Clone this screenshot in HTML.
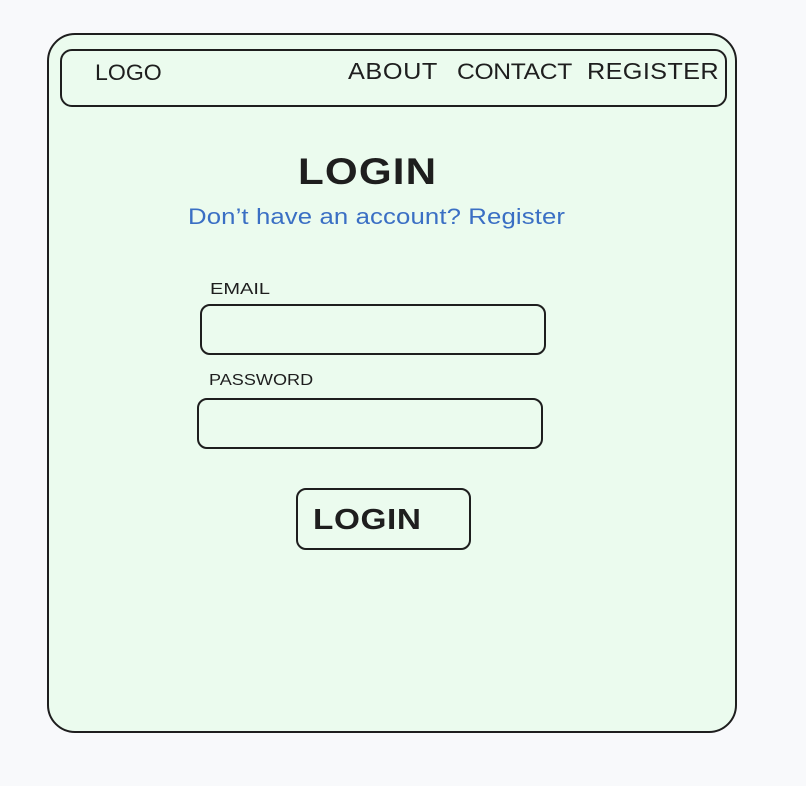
<!DOCTYPE html>
<html><head><meta charset="utf-8"><style>
body{margin:0;width:806px;height:786px;background:#f8f9fb;position:relative;overflow:hidden;font-family:"Liberation Sans",sans-serif;color:#1e1e1e}
.b{position:absolute;border:2px solid #1e1e1e;box-sizing:border-box}
.t{position:absolute;white-space:nowrap;line-height:1;transform-origin:0 0}
</style></head><body>
<div class="b" style="left:47px;top:33px;width:690px;height:700px;border-radius:28px;background:#ebfbee"></div>
<div class="b" style="left:60px;top:49px;width:667px;height:58px;border-radius:12px"></div>
<div class="t" style="left:95px;top:62px;font-size:22px;transform:scaleX(1.05)">LOGO</div>
<div class="t" style="left:348px;top:60px;font-size:23px;letter-spacing:0.5px;transform:scaleX(1.1)">ABOUT</div>
<div class="t" style="left:457px;top:61px;font-size:22px;letter-spacing:-0.3px;transform:scaleX(1.12)">CONTACT</div>
<div class="t" style="left:587px;top:60px;font-size:23px;letter-spacing:0.3px;transform:scaleX(1.1)">REGISTER</div>
<div class="t" style="left:298px;top:153px;font-size:37px;font-weight:bold;letter-spacing:1px;transform:scaleX(1.14)">LOGIN</div>
<div class="t" style="left:188px;top:206px;font-size:22px;color:#3a6fc4;letter-spacing:0.1px;transform:scaleX(1.17)">Don’t have an account? Register</div>
<div class="t" style="left:210px;top:282px;font-size:16px;transform:scaleX(1.25)">EMAIL</div>
<div class="b" style="left:200px;top:304px;width:346px;height:51px;border-radius:10px"></div>
<div class="t" style="left:209px;top:373px;font-size:16px;transform:scaleX(1.13)">PASSWORD</div>
<div class="b" style="left:197px;top:398px;width:346px;height:51px;border-radius:10px"></div>
<div class="b" style="left:296px;top:488px;width:175px;height:62px;border-radius:10px"></div>
<div class="t" style="left:313px;top:506px;font-size:29px;font-weight:bold;letter-spacing:0.5px;transform:scaleX(1.15)">LOGIN</div>
</body></html>
